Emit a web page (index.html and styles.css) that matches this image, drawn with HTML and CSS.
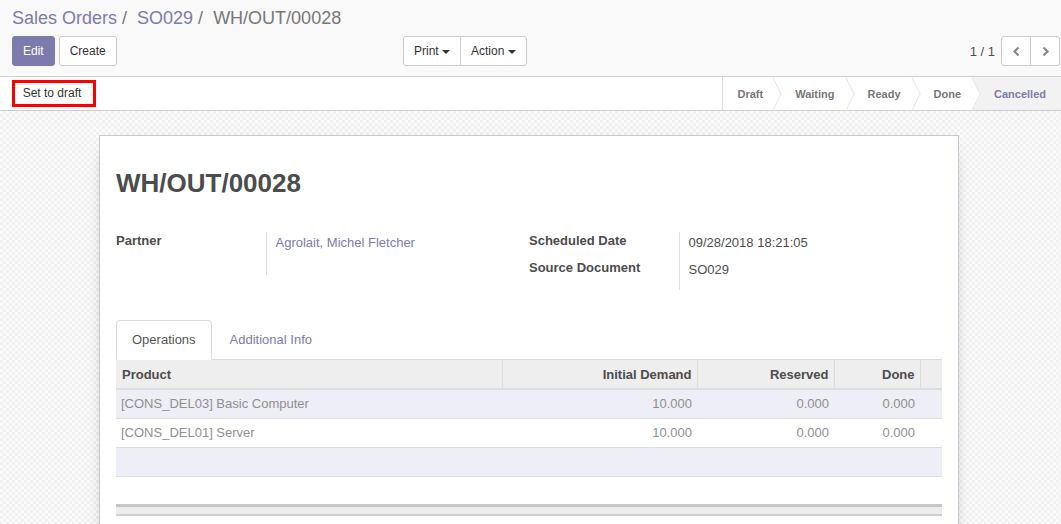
FILE: index.html
```html
<!DOCTYPE html>
<html>
<head>
<meta charset="utf-8">
<link rel="stylesheet" href="styles.css">
</head>
<body>
<div class="cp">
  <ol class="crumbs">
    <li><a class="crumb-link">Sales Orders</a><span class="sep">/</span></li>
    <li><a class="crumb-link">SO029</a><span class="sep">/</span></li>
    <li class="crumb-active">WH/OUT/00028</li>
  </ol>
  <div class="cp-row">
    <div class="cp-buttons">
      <button class="btn btn-primary">Edit</button>
      <button class="btn btn-default">Create</button>
    </div>
    <div class="btn-group">
      <button class="btn btn-default grp-first">Print <span class="caret"></span></button>
      <button class="btn btn-default grp-last">Action <span class="caret"></span></button>
    </div>
    <div class="pager">
      <span class="pager-value">1 / 1</span>
      <div class="btn-group">
        <button class="btn btn-default pager-btn grp-first"><svg width="9" height="11" viewBox="0 0 9 11"><polyline points="6.5,1.5 2.5,5.5 6.5,9.5" fill="none" stroke="#888" stroke-width="2.2"/></svg></button>
        <button class="btn btn-default pager-btn grp-last"><svg width="9" height="11" viewBox="0 0 9 11"><polyline points="2.5,1.5 6.5,5.5 2.5,9.5" fill="none" stroke="#888" stroke-width="2.2"/></svg></button>
      </div>
    </div>
  </div>
</div>

<div class="statusbar">
  <div class="sb-buttons">
    <button class="btn-draft">Set to draft</button>
  </div>
  <div class="steps">
    <span class="step first">Draft</span>
    <span class="step">Waiting</span>
    <span class="step">Ready</span>
    <span class="step">Done</span>
    <span class="step active">Cancelled</span>
  </div>
</div>

<div class="sheet-bg">
  <div class="sheet">
    <h1 class="title">WH/OUT/00028</h1>
    <div class="groups">
      <table class="group">
        <tr>
          <td class="lbl partner">Partner</td>
          <td class="val"><a class="link">Agrolait, Michel Fletcher</a></td>
        </tr>
      </table>
      <table class="group">
        <tr>
          <td class="lbl">Scheduled Date</td>
          <td class="val">09/28/2018 18:21:05</td>
        </tr>
        <tr>
          <td class="lbl last">Source Document</td>
          <td class="val">SO029</td>
        </tr>
      </table>
    </div>

    <ul class="tabs">
      <li class="tab active">Operations</li>
      <li class="tab">Additional Info</li>
    </ul>
    <table class="list">
      <colgroup>
        <col class="c-prod"><col class="c-dem"><col class="c-res"><col class="c-done"><col class="c-del">
      </colgroup>
      <thead>
        <tr>
          <th>Product</th>
          <th class="num">Initial Demand</th>
          <th class="num">Reserved</th>
          <th class="num">Done</th>
          <th></th>
        </tr>
      </thead>
      <tbody>
        <tr class="odd">
          <td>[CONS_DEL03] Basic Computer</td>
          <td class="num">10.000</td>
          <td class="num">0.000</td>
          <td class="num">0.000</td>
          <td></td>
        </tr>
        <tr>
          <td>[CONS_DEL01] Server</td>
          <td class="num">10.000</td>
          <td class="num">0.000</td>
          <td class="num">0.000</td>
          <td></td>
        </tr>
        <tr class="odd"><td></td><td></td><td></td><td></td><td></td></tr>
        <tr><td></td><td></td><td></td><td></td><td></td></tr>
      </tbody>
      <tfoot>
        <tr><td></td><td></td><td></td><td></td><td></td></tr>
      </tfoot>
    </table>
  </div>
</div>
</body>
</html>
```

FILE: styles.css
```css
* { box-sizing: border-box; }
html, body { margin: 0; padding: 0; height: 100%; }
body {
  font-family: "Liberation Sans", Arial, sans-serif;
  font-size: 13px;
  color: #4c4c4c;
  background: #fff;
  overflow: hidden;
}

/* control panel */
.cp {
  background: #f9f9f9;
  border-bottom: 1px solid #cfcfcf;
  padding: 5px 1px 10px 12px;
}
.crumbs {
  list-style: none;
  margin: 0;
  padding: 0;
  display: flex;
  font-size: 18px;
  line-height: 26px;
  height: 26px;
}
.crumb-link { color: #7c7bad; }
.sep { color: #777; margin: 0 10px 0 5px; }
.crumb-active { color: #777; }
.cp-row {
  display: flex;
  align-items: center;
  margin-top: 5px;
}
.cp-buttons { width: 391px; display: flex; gap: 4px; }
.btn {
  font-family: inherit;
  font-size: 12px;
  line-height: 18px;
  padding: 5px 10px;
  height: 30px;
  border-radius: 3px;
  border: 1px solid #ccc;
  cursor: pointer;
}
.btn-primary { background: #7c7bad; border-color: #7c7bad; color: #fff; }
.btn-default { background: #fff; color: #333; }
.btn-group { display: flex; }
.grp-first { border-top-right-radius: 0; border-bottom-right-radius: 0; }
.grp-last { border-top-left-radius: 0; border-bottom-left-radius: 0; margin-left: -1px; }
.caret {
  display: inline-block;
  width: 0; height: 0;
  border-top: 4px solid #333;
  border-left: 4px solid transparent;
  border-right: 4px solid transparent;
  vertical-align: middle;
}
.pager { margin-left: auto; display: flex; align-items: center; }
.pager-value { margin-right: 6px; font-size: 13px; }
.pager-btn { width: 30px; padding: 0; display: flex; align-items: center; justify-content: center; }

/* status bar */
.statusbar {
  display: flex;
  justify-content: space-between;
  align-items: stretch;
  height: 34px;
  border-bottom: 1px solid #ccc;
  background: #fff;
}
.sb-buttons { display: flex; align-items: center; padding-left: 12px; }
.btn-draft {
  font-family: inherit;
  font-size: 12px;
  color: #333;
  background: #fff;
  border: 3px solid #f00;
  width: 84px;
  height: 27px;
  padding: 0 4px 0 0;
  margin-top: -1px;
}
.steps { display: flex; border-left: 1px solid #ddd; }
.step {
  position: relative;
  display: flex;
  align-items: center;
  font-weight: bold;
  font-size: 11px;
  color: #777;
  padding: 0 11px 0 22px;
}
.step.first { padding-left: 15px; padding-right: 10px; }
.step::after {
  content: "";
  position: absolute;
  right: -12px;
  top: 5px;
  width: 23px;
  height: 23px;
  background: #fff;
  border-top: 1px solid #ddd;
  border-right: 1px solid #ddd;
  transform: scaleX(0.5) rotate(45deg);
  z-index: 1;
}
.step.active { background: #f2f2f2; color: #7c7bad; padding-right: 15px; }
.step.active::after { display: none; }

/* sheet */
.sheet-bg {
  height: 100%;
  padding: 24px 3px 0 0;
  background-color: #f6f6f6;
  background-image: repeating-conic-gradient(#f1f1f1 0 25%, #fbfbfb 0 50%);
  background-size: 6px 6px;
}
.sheet {
  width: 860px;
  margin: 0 auto;
  min-height: 500px;
  background: #fff;
  border: 1px solid #c8c8d3;
  box-shadow: 0 5px 20px -15px #000;
  padding: 30px 16px 0;
}
.title {
  margin: 0;
  font-size: 26px;
  line-height: 34px;
  font-weight: bold;
  color: #4c4c4c;
}
.groups { display: flex; align-items: flex-start; margin-top: 32px; }
.group { width: 50%; border-collapse: collapse; }
.group td { vertical-align: top; padding: 0; }
.lbl {
  width: 150px;
  height: 27px;
  font-weight: bold;
  border-right: 1px solid #ddd;
  padding: 1px 0 0 0 !important;
}
.lbl.partner { height: 43px; }
.lbl.last { height: 31px; }
.val { padding: 3px 0 0 9px !important; }
.link { color: #7c7bad; }

.tabs {
  list-style: none;
  margin: 30px 0 0;
  padding: 0;
  display: flex;
  border-bottom: 1px solid #ddd;
}
.tab {
  padding: 10px 15px;
  line-height: 18px;
  border: 1px solid transparent;
  border-radius: 4px 4px 0 0;
  margin-right: 2px;
  margin-bottom: -1px;
  color: #7c7bad;
}
.tab.active { color: #555; background: #fff; border-color: #ddd; border-bottom-color: #fff; }

.list {
  width: 100%;
  border-collapse: collapse;
  table-layout: fixed;
}
.c-prod { width: 386px; }
.c-dem { width: 195px; }
.c-res { width: 137px; }
.c-done { width: 86px; }
.c-del { width: 22px; }
.list th {
  background: #eee;
  text-align: left;
  font-weight: bold;
  height: 29px;
  padding: 0 5px 0 6px;
  border-left: 1px solid #ddd;
  border-bottom: 2px solid #ddd;
  color: #4c4c4c;
}
.list th:first-child { border-left: none; }
.list td {
  height: 29px;
  padding: 0 5px;
  color: #8f8f8f;
  border-bottom: 1px solid #ddd;
}
.list .num { text-align: right; }
.list tr.odd td { background: #eeeef6; }
.list tfoot td {
  height: 10px;
  background: #ececec;
  border-top: 3px solid #c6c6c6;
  border-bottom: 2px solid #cfcfcf;
}
```
